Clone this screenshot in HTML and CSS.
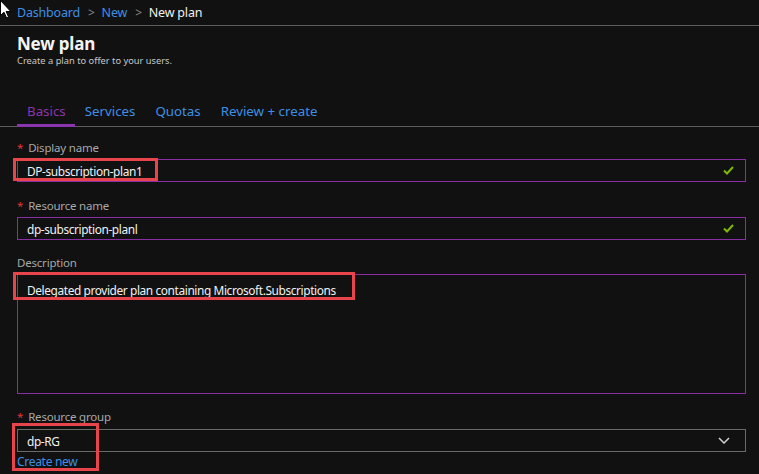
FILE: index.html
```html
<!DOCTYPE html>
<html lang="en">
<head>
<meta charset="utf-8">
<title>New plan</title>
<link rel="stylesheet" href="styles.css">
</head>
<body>
<div class="page">
  <svg class="cursor" width="12" height="19" viewBox="0 0 12 19"><path d="M0.5 0.5 L0.5 15.5 L4 12.2 L6.6 18 L8.6 17.1 L6.1 11.5 L10.8 11.5 Z" fill="#fff" stroke="#000" stroke-width="1"/></svg>
  <nav class="crumbs">
    <a class="crumb-link">Dashboard</a>
    <span class="crumb-sep">&gt;</span>
    <a class="crumb-link">New</a>
    <span class="crumb-sep">&gt;</span>
    <span class="crumb-current">New plan</span>
  </nav>
  <header class="head">
    <h1 class="title">New plan</h1>
    <p class="subtitle">Create a plan to offer to your users.</p>
  </header>
  <div class="tabs">
    <span class="tab active">Basics</span>
    <span class="tab">Services</span>
    <span class="tab">Quotas</span>
    <span class="tab">Review + create</span>
  </div>
  <form class="form">
    <div class="field f1">
      <label class="label"><span class="req">*</span>Display name</label>
      <div class="control">
        <div class="input valid"><span class="val">DP-subscription-plan1</span>
          <svg class="check" width="11" height="9" viewBox="0 0 11 9"><path d="M1 4.5 L4 7.5 L10 1" fill="none" stroke="#7fba00" stroke-width="2"/></svg>
        </div>
        <span class="mark mark-name"></span>
      </div>
    </div>
    <div class="field f2">
      <label class="label"><span class="req">*</span>Resource name</label>
      <div class="control">
        <div class="input valid"><span class="val">dp-subscription-planl</span>
          <svg class="check" width="11" height="9" viewBox="0 0 11 9"><path d="M1 4.5 L4 7.5 L10 1" fill="none" stroke="#7fba00" stroke-width="2"/></svg>
        </div>
      </div>
    </div>
    <div class="field f3">
      <label class="label">Description</label>
      <div class="control">
        <div class="textarea"><span class="val">Delegated provider plan containing Microsoft.Subscriptions</span></div>
        <span class="mark mark-desc"></span>
      </div>
    </div>
    <div class="field f4">
      <label class="label"><span class="req">*</span>Resource group</label>
      <div class="control">
        <div class="select"><span class="val">dp-RG</span>
          <svg class="chev" width="12" height="7" viewBox="0 0 12 7"><path d="M1 1 L6 6 L11 1" fill="none" stroke="#d0d0d0" stroke-width="1.5"/></svg>
        </div>
        <a class="create">Create new</a>
        <span class="mark mark-rg"></span>
      </div>
    </div>
  </form>
</div>
</body>
</html>
```

FILE: styles.css
```css
html, body {
  margin: 0;
  padding: 0;
  background: #111111;
}
body {
  font-family: "Noto Sans", "Open Sans", sans-serif;
  color: #e8e8e8;
  width: 759px;
  height: 474px;
  overflow: hidden;
}
.page {
  position: relative;
}
.cursor {
  position: absolute;
  left: 0;
  top: 0;
  z-index: 5;
}
.crumbs {
  height: 25px;
  line-height: 26px;
  border-bottom: 1px solid #5c5c5c;
  padding-left: 17px;
  font-size: 12.5px;
  letter-spacing: -0.2px;
  display: flex;
  align-items: center;
}
.crumb-link {
  color: #3f8fe4;
}
.crumb-sep {
  color: #8a8a8a;
  margin: 0 7px 0 8px;
  font-size: 12px;
}
.crumb-current {
  color: #f0f0f0;
}
.head {
  padding: 7px 0 0 17px;
}
.title {
  margin: 0;
  font-size: 17px;
  line-height: 22px;
  font-weight: 700;
  color: #f4f4f4;
  letter-spacing: -0.2px;
}
.subtitle {
  margin: 0;
  font-size: 9.3px;
  line-height: 12px;
  color: #c8c8c8;
}
.tabs {
  margin: 34px 0 0 0;
  padding-left: 17px;
  display: flex;
  border-bottom: 1px solid #5c5c5c;
}
.tab {
  font-size: 13.3px;
  line-height: 20px;
  padding: 0 10px 3px;
  border-bottom: 3px solid transparent;
  margin-bottom: -1px;
  color: #3f8fe4;
}
.tab.active {
  color: #8a35ad;
  border-bottom-color: #8a35ad;
  padding-right: 9px;
}
.form {
  padding: 0 13px 0 17px;
}
.field.f1 { margin-top: 13px; }
.field.f2 { margin-top: 16px; }
.field.f3 { margin-top: 15px; }
.field.f4 { margin-top: 15px; }
.label {
  display: block;
  font-size: 11.5px;
  line-height: 16px;
  color: #a8a8a8;
  letter-spacing: -0.2px;
}
.req {
  color: #e0343c;
  margin-right: 5px;
}
.control {
  position: relative;
  margin-top: 3px;
}
.f4 .control { margin-top: 4px; }
.input, .select {
  box-sizing: border-box;
  height: 23px;
  border: 1px solid #8a2ea6;
  display: flex;
  align-items: center;
  justify-content: space-between;
  padding: 0 9px;
}
.select {
  border-color: #6a6a6a;
}
.val {
  font-size: 11.9px;
  letter-spacing: -0.4px;
  color: #f2f2f2;
  line-height: 16px;
}
.check {
  margin-right: 2px;
}
.chev {
  margin-right: 6px;
}
.textarea {
  box-sizing: border-box;
  height: 120px;
  border: 1px solid #8a2ea6;
  padding: 3px 9px;
}
.create {
  display: block;
  font-size: 12px;
  letter-spacing: -0.3px;
  line-height: 14px;
  margin-top: 3px;
  color: #3f8fe4;
}
.mark {
  position: absolute;
  box-sizing: border-box;
  border: 3px solid #e8444c;
}
.mark-name {
  left: -4px;
  top: -1px;
  width: 145px;
  height: 23px;
}
.mark-desc {
  left: -4px;
  top: -2px;
  width: 342px;
  height: 28px;
}
.mark-rg {
  left: -5px;
  top: -6px;
  width: 87px;
  height: 48px;
}
```
